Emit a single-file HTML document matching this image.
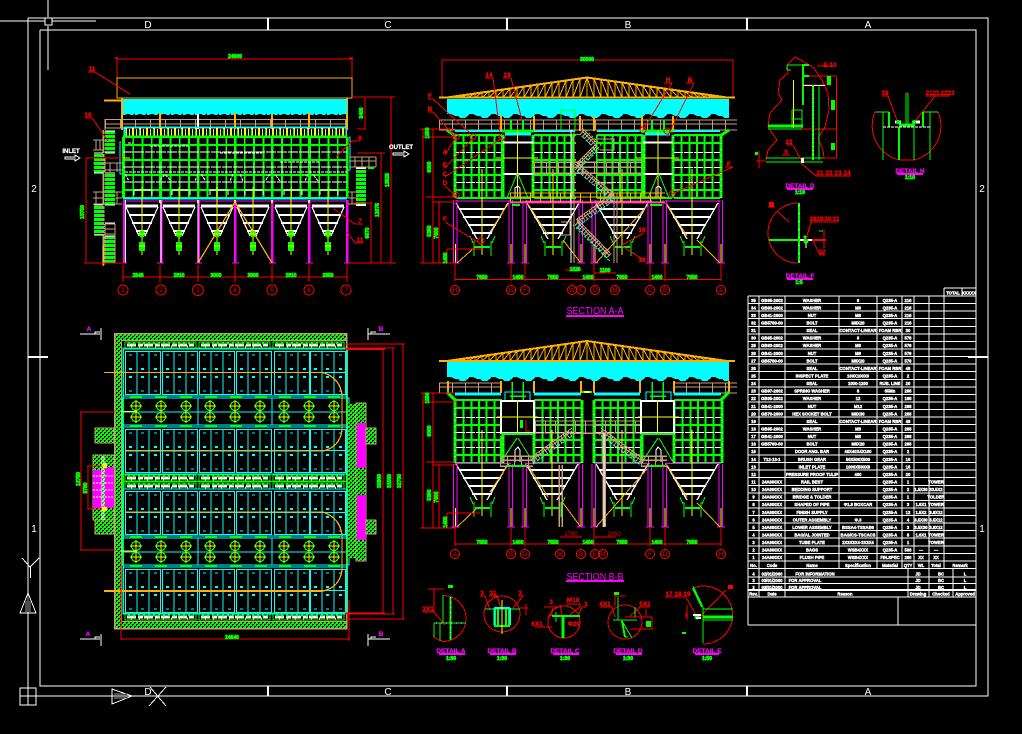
<!DOCTYPE html>
<html><head><meta charset="utf-8"><title>Drawing</title>
<style>
html,body{margin:0;padding:0;background:#000;width:1022px;height:734px;overflow:hidden}
svg{display:block;position:absolute;left:0;top:0}
text{font-family:"Liberation Sans",sans-serif}
.w{fill:#fff;stroke:#fff;stroke-width:.4;font-size:4.2px;font-weight:bold;text-anchor:middle}
.g{fill:#0f0;stroke:#0f0;stroke-width:.7;font-size:5px;font-weight:bold;text-anchor:middle}
.r{fill:#f00;stroke:#f00;stroke-width:.25;font-size:6.5px;font-weight:bold;text-anchor:middle}
.c{fill:#f00;font-size:6px;text-anchor:middle}
.m{fill:#f0f;stroke:#f0f;stroke-width:.2;font-size:6.5px;font-weight:bold;text-anchor:middle}
.t{fill:#fff;font-size:10px;text-anchor:middle}
</style></head><body>
<svg xmlns="http://www.w3.org/2000/svg" width="1022" height="734" viewBox="0 0 1022 734" shape-rendering="crispEdges" fill="none">
<defs>
<pattern id="hat" width="4" height="4" patternUnits="userSpaceOnUse"><rect width="4" height="4" fill="#0f0"/><rect x="0" y="0" width="2" height="1" fill="#000"/><rect x="0" y="1" width="1" height="1" fill="#000"/><rect x="2" y="2" width="2" height="1" fill="#000"/><rect x="2" y="3" width="1" height="1" fill="#000"/></pattern>
<pattern id="sc1" x="123" y="112" width="12" height="4" patternUnits="userSpaceOnUse"><path d="M0 0H12V1L10 3H8L6 2H4L2 3H0Z" fill="#0ff"/></pattern>
<pattern id="sc2" x="447" y="113" width="22" height="6" patternUnits="userSpaceOnUse"><path d="M0 0H22V2L18 5H13L11 3H8L4 1H0Z" fill="#0ff"/></pattern>
<pattern id="sc3" x="447" y="376" width="22" height="6" patternUnits="userSpaceOnUse"><path d="M0 0H22V2L18 5H13L11 3H8L4 1H0Z" fill="#0ff"/></pattern>

<g id="tr">
<path d="M0 -20L140 0M-2 0H148" stroke="#ffb000" stroke-width="2"/>
<path d="M0 0V-20M7 0V-19M14 0V-18M21 0V-17M28 0V-16M35 0V-15M42 0V-14M49 0V-13M56 0V-12M63 0V-11M70 0V-10M77 0V-9M84 0V-8M91 0V-7M98 0V-6M105 0V-5M112 0V-4M119 0V-3M126 0V-2M133 0V-1M0 -20L7 0M7 -19L14 0M14 -18L21 0M21 -17L28 0M28 -16L35 0M35 -15L42 0M42 -14L49 0M49 -13L56 0M56 -12L63 0M63 -11L70 0M70 -10L77 0M77 -9L84 0M84 -8L91 0M91 -7L98 0M98 -6L105 0M105 -5L112 0M112 -4L119 0M119 -3L126 0M126 -2L133 0" stroke="#ffb000"/>
</g>
<g id="truss"><use href="#tr"/><use href="#tr" transform="scale(-1 1)"/></g>

<g id="bay">
<path d="M7.7 0V63M15.4 0V63M23 0V63M30.7 0V63M38.4 0V63M0 0H46M0 8H46M0 25H46M0 40H46M0 55H46M0 63H46" stroke="#0f0" stroke-width="2"/>
<path d="M-1 0V63M47 0V63" stroke="#0f0" stroke-width="3"/>
<path d="M0 17.5H46M0 32.5H46M0 47.5H46" stroke="#fff" stroke-width="1.2" stroke-dasharray="9 1"/>
<path d="M-1 2V63M47 2V63" stroke="#fff" stroke-width="1" stroke-dasharray="1 5"/>
</g>

<g id="hs">
<path d="M-26 0L-5 36M26 0L5 36" stroke="#fff" stroke-width="1.3"/>
<path d="M-23 6H23M-19 14H19M-14 22H14M-10 30H10" stroke="#fff" stroke-width="2"/>
<path d="M0 -34V52" stroke="#ff0"/>
<path d="M-7 44H8" stroke="#0f0" stroke-width="2"/>
<path d="M9 38V53M-8 38V53M-9 40L-12 33M10 40L13 33" stroke="#0f0"/>
</g>

<g id="col">
<path d="M-2 0V63M1.5 0V63" stroke="#f0f"/>
<path d="M0 44V63" stroke="#ff0"/>
<path d="M-4 63H4" stroke="#f0f"/>
</g>

<g id="he">
<path d="M-16 3H16" stroke="#fff" stroke-width="3"/>
<path d="M-16 4L-3 33M16 4L3 33" stroke="#fff" stroke-width="1.2"/>
<path d="M-13 12H13M-10 20H10M-6 28H6" stroke="#fff" stroke-width="1.6"/>
<path d="M0 -16V52" stroke="#ff0"/>
<circle cx="0" cy="31" r="3.5" fill="#0f0"/>
<rect x="-3" y="39" width="6" height="9" fill="#0f0"/>
<path d="M-4 31H4M-3 43H3" stroke="#ff0"/>
</g>

<g id="pb">
<rect x=".5" y=".5" width="35" height="43" stroke="#0ff"/>
<path d="M12 0V43M24 0V43" stroke="#0ff"/>
<path d="M4 4h3M16 4h3M29 4h3M4 40h3M16 40h3M29 40h3" stroke="#0ff"/>
<path d="M4 18h3M16 18h3M29 18h3M4 26h3M16 26h3M29 26h3" stroke="#0ff" stroke-width="2"/>
</g>
<g id="pr">
<rect x="-2" y="-2" width="224" height="47" stroke="#0ff"/>
<use href="#pb" x="0"/><use href="#pb" x="37"/><use href="#pb" x="74"/><use href="#pb" x="111"/><use href="#pb" x="149"/><use href="#pb" x="185"/>
<path d="M0 21.5H221" stroke="#0ff"/>
</g>
<g id="pf">
<circle cx="0" cy="0" r="4.5" stroke="#0f0" stroke-width="1.2"/>
<path d="M-6 0H6M0 -6V6" stroke="#ff0"/>
</g>
<g id="pm">
<rect x="122" y="0" width="227" height="27" stroke="#0ff"/>
<path d="M122 14H349M198 0V27M272 0V27" stroke="#0ff"/>
<path d="M130 -1H142M155 -1H167M180 -1H192M205 -1H217M230 -1H242M255 -1H267M279 -1H291M304 -1H316M328 -1H340M130 28H142M155 28H167M180 28H192M205 28H217M230 28H242M255 28H267M279 28H291M304 28H316M328 28H340" stroke="#0f0" stroke-width="2"/>
<use href="#pf" x="136" y="8"/><use href="#pf" x="161" y="8"/><use href="#pf" x="186" y="8"/><use href="#pf" x="210" y="8"/><use href="#pf" x="235" y="8"/><use href="#pf" x="260" y="8"/><use href="#pf" x="284" y="8"/><use href="#pf" x="309" y="8"/><use href="#pf" x="334" y="8"/>
<use href="#pf" x="136" y="19"/><use href="#pf" x="161" y="19"/><use href="#pf" x="186" y="19"/><use href="#pf" x="210" y="19"/><use href="#pf" x="235" y="19"/><use href="#pf" x="260" y="19"/><use href="#pf" x="284" y="19"/><use href="#pf" x="309" y="19"/><use href="#pf" x="334" y="19"/>
</g>
<g id="ps">
<rect x="0" y="0" width="71" height="6" stroke="#0f0"/>
<path d="M2 3H69" stroke="#fff" stroke-width="2.6" stroke-dasharray="9 2 5 1"/>
<path d="M3 1.5H69" stroke="#0f0" stroke-width="2" stroke-dasharray="2 3"/>
<path d="M6 4.5H69" stroke="#ff0" stroke-width="2" stroke-dasharray="1 7"/>
</g>
<g id="pss"><use href="#ps"/><use href="#ps" x="74"/><use href="#ps" x="148"/></g>
<g id="fa"><path d="M582 132L597 147M597 147L577 167M577 167L613 197M613 197L577 223M577 223L610 257"/></g>
<g id="fb"><path d="M533 460L572 432M601 432L642 462"/></g>
</defs>

<!-- FRAME -->
<g stroke="#fff">
<path d="M28 18H45M52 18H988V696H20M28 18V705M40 30H976V686H40V30"/>
<path d="M0 21H45M52 21H96M48 0V17M48 26V70"/>
<rect x="45" y="18" width="7" height="7"/>
<rect x="20" y="688" width="16" height="17"/><path d="M28 696H36"/>
</g>
<g stroke="#fff" stroke-width="2">
<path d="M268 18V30M507 18V30M747 18V30M268 686V696M507 686V696M747 686V696M28 357H48M968 357H988"/>
</g>
<text class="t" x="148" y="28">D</text><text class="t" x="388" y="28">C</text><text class="t" x="628" y="28">B</text><text class="t" x="868" y="28">A</text>
<text class="t" x="148" y="695">D</text><text class="t" x="388" y="695">C</text><text class="t" x="628" y="695">B</text><text class="t" x="868" y="695">A</text>
<text class="t" x="34" y="192">2</text><text class="t" x="34" y="532">1</text><text class="t" x="982" y="192">2</text><text class="t" x="982" y="532">1</text>
<!-- UCS icons -->
<g stroke="#fff">
<path d="M22 558L30 567L39 558M30.500 567V578"/>
<path d="M20 613H36L28 593Z"/><path d="M28 595V612M26 601V612M30 601V612" stroke="#999"/>
<path d="M112 689V704L132 696Z"/><path d="M114 694H128M114 698H128" stroke="#999"/>
<path d="M149 706L166 687M150 687L166 706"/>
</g>

<!-- FRONT ELEVATION -->
<g>
<path d="M117 59H352M117 57V78M352 57V78M114 58h4M349 58h4" stroke="#f00"/>
<rect x="117" y="78" width="235" height="20" stroke="#ffb000"/>
<path d="M104 100.500H122" stroke="#ffb000" stroke-width="2"/>
<path d="M122 98V130M347 98V130" stroke="#ffb000" stroke-width="2"/>
<rect x="123" y="99" width="224" height="13" fill="#0ff"/>
<rect x="123" y="112" width="224" height="4" fill="url(#sc1)"/>
<!-- rail -->
<path d="M105 119.500H347M105 124H347M105 128H347" stroke="#c8a078" stroke-width="1.300"/>
<path d="M105 124H347" stroke="#c8a078" stroke-width="9" stroke-dasharray="1 14"/>
<path d="M160 112V129M198 114V129M235 112V129M272 114V129M309 112V129" stroke="#ffb000" stroke-width="2"/>
<path d="M198 114V129" stroke="#fff" stroke-width="2"/>
<!-- top teeth -->
<rect x="124" y="127" width="222" height="9" stroke="#0ff" stroke-width="1.500"/>
<path d="M125 132.500H346" stroke="#ff0" stroke-width="7" stroke-dasharray="2 2 1 2"/>
<path d="M125 132.500H346" stroke="#0f0" stroke-width="7" stroke-dasharray="1 13"/>
<path d="M125 128.500H346" stroke="#fff" stroke-dasharray="2 5"/>
<path d="M123 136.500H347" stroke="#0f0" stroke-width="2"/>
<!-- grid -->
<path d="M123 167H347" stroke="#0f0" stroke-width="61" stroke-dasharray="1.800 7.500"/>
<path d="M123 137H347M123 145H347M123 160H347M123 175H347M123 190H347M123 198H347" stroke="#0f0" stroke-width="2"/>
<path d="M123 137V198M160 137V198M198 137V198M235 137V198M272 137V198M309 137V198M347 137V198" stroke="#0f0" stroke-width="2.500"/>
<path d="M123 152H347M123 167H347M123 182H347" stroke="#fff" stroke-dasharray="10 1"/>
<path d="M123 198.500H347" stroke="#0ff" stroke-width="2"/>
<path d="M150 146H190M220 153H262M280 162H320M128 143H133M125 174L129 181M160 180L165 174M170 180L165 174M198 174L195 181M205 180L201 174M233 174L230 181M243 181L240 174M270 174L265 181M280 181L275 174M308 174L305 181M318 181L313 174M125 172H347" stroke="#fff" stroke-dasharray="3 1"/>
<path d="M134 190H152V195M134 190V195M172 190H190V195M172 190V195M210 190H228V195M210 190V195M245 190H263V195M245 190V195M284 190H302V195M284 190V195M320 190H338V195M320 190V195" stroke="#fff"/>
<path d="M142 187V196M179 187V196M217 187V196M253 187V196M291 187V196M328 187V196" stroke="#ff0"/>
<path d="M111 131V132M108 158H130" stroke="#ff0"/>
<!-- cyan side -->
<path d="M121 142H120V174H122M349 137H350V170H347" stroke="#0ff"/>
<!-- hoppers -->
<path d="M123 201H347" stroke="#f0f"/>
<use href="#he" x="142" y="203"/><use href="#he" x="179" y="203"/><use href="#he" x="217" y="203"/><use href="#he" x="253" y="203"/><use href="#he" x="291" y="203"/><use href="#he" x="328" y="203"/>
<path d="M124 200V263M161 200V263M198.500 200V263M235 200V263M272 200V263M309 200V263M347 200V263" stroke="#f0f" stroke-width="2.500"/>
<path d="M125.500 200V263M161 200V263M198 200V263" stroke="#fff"/>
<path d="M120 263H127M157 263H164M195 263H202M232 263H239M269 263H276M306 263H313M344 263H351" stroke="#f0f"/>
<path d="M198 263L235 202L272 263" stroke="#ffb000" stroke-width="1.300"/>
<path d="M160 200V203M198 200V203M235 200V203M272 200V203M309 200V203" stroke="#ff0" stroke-width="2"/>
<!-- left stairs -->
<path d="M103.500 130V265" stroke="#c8a078" stroke-width="2"/>
<path d="M103 245V266" stroke="#ff0"/>
<path d="M93 140H103M93 150H103M93 192H122M93 198H122M93 204H122M93 163H122M93 170H122M105 119V130M105 158V172" stroke="#c8a078"/>
<g stroke="#c8a078"><path d="M96 140V150M100 140V150M110 163V172M117 163V172M96 192V204M113 192V204M117 192V204"/></g>
<rect x="94" y="153" width="9" height="20" fill="#0f0"/><rect x="94" y="205" width="9" height="30" fill="#0f0"/>
<rect x="105" y="131" width="10" height="22" fill="#0f0"/><rect x="105" y="174" width="10" height="31" fill="#0f0"/><rect x="105" y="236" width="10" height="27" fill="#0f0"/>
<path d="M110 130V153M110 173V205M110 223V263M98.500 153V173M98.500 205V235" stroke="#000" stroke-width="12" stroke-dasharray="1 3"/>
<path d="M105 131H115M105 153H115M105 173H115M105 205H115M105 223H115M105 236H115M94 153H103M94 173H103M94 205H103M94 235H103" stroke="#fff"/>
<path d="M105 224H115M105 229H115M105 234H115M115 224V263M105 224V263" stroke="#c8a078"/>
<!-- right stairs -->
<rect x="356" y="169" width="10" height="36" fill="#0f0"/>
<path d="M361 169V205" stroke="#000" stroke-width="10" stroke-dasharray="1 3"/>
<path d="M356 168H366M356 205H366" stroke="#fff" stroke-width="2"/>
<path d="M349 157H376M349 161H376M349 167H376M348 192H358M348 198H358M348 204H358" stroke="#c8a078"/>
<path d="M355 157V167M362 157V167M369 157V167M376 157V167M352 192V204" stroke="#c8a078"/>
<path d="M368 168H374" stroke="#0f0" stroke-width="2"/>
<!-- dims -->
<path d="M86 158V263M86 158H123M84 263H125M352 97H395M391 97V263M357 129H366M365 98V129M357 153H385M381 153V263M354 203H373M371 203V263M350 263H396M123 277H347M123 265V282M160 265V282M198 265V282M235 265V282M272 265V282M309 265V282M347 265V282" stroke="#f00"/>
<path d="M88 72H95L130 94M85 118H92L108 141M360 141H352L336 157M363 224H355L334 209M363 243H355L347 232" stroke="#f00"/>
<text class="r" x="92" y="71">11</text><text class="r" x="88" y="117">10</text><text class="r" x="360" y="140">8</text><text class="r" x="360" y="223">7</text><text class="r" x="360" y="242">11</text>
<text class="g" x="235" y="58">24600</text>
<text class="g" x="138" y="277">2648</text><text class="g" x="179" y="277">2810</text><text class="g" x="216" y="277">3000</text><text class="g" x="253" y="277">3000</text><text class="g" x="291" y="277">2810</text><text class="g" x="328" y="277">2950</text>
<text class="g" transform="rotate(-90 84 212)" x="84" y="212">13750</text>
<text class="g" transform="rotate(-90 363 113)" x="363" y="113">3400</text>
<text class="g" transform="rotate(-90 389 180)" x="389" y="180">13525</text>
<text class="g" transform="rotate(-90 379 210)" x="379" y="210">12075</text>
<text class="g" transform="rotate(-90 369 233)" x="369" y="233">6870</text>
<g stroke="#f00"><circle cx="123" cy="290" r="5"/><circle cx="161" cy="290" r="5"/><circle cx="198" cy="290" r="5.500"/><circle cx="235" cy="290" r="5"/><circle cx="272" cy="290" r="5"/><circle cx="309" cy="290" r="5"/><circle cx="346" cy="290" r="5"/></g>
<text class="c" x="123" y="292">1</text><text class="c" x="161" y="292">2</text><text class="c" x="198" y="292">3</text><text class="c" x="235" y="292">4</text><text class="c" x="272" y="292">5</text><text class="c" x="309" y="292">6</text><text class="c" x="346" y="292">7</text>
<!-- inlet/outlet -->
<text x="71" y="153" fill="#fff" stroke="#fff" stroke-width=".2" font-size="6" font-weight="bold" text-anchor="middle">INLET</text>
<path d="M65 157H75V155L80 158L75 161V159H65Z" stroke="#fff"/>
<text x="401" y="149" fill="#fff" stroke="#fff" stroke-width=".2" font-size="6" font-weight="bold" text-anchor="middle">OUTLET</text>
<path d="M393 153H404V151L409 154L404 157V155H393Z" stroke="#fff"/>
</g>

<!-- SECTION A-A -->
<g>
<path d="M442 60H733M442 60V97M733 60V97" stroke="#f00"/>
<use href="#truss" x="587" y="97.500"/>
<rect x="447" y="99" width="282" height="14" fill="#0ff"/>
<rect x="447" y="113" width="282" height="6" fill="url(#sc2)"/>
<path d="M439 120H737M439 124H737M439 130H737" stroke="#c8a078" stroke-width="1.300"/>
<path d="M439 125H737" stroke="#c8a078" stroke-width="10" stroke-dasharray="1 12"/>
<rect x="561" y="110" width="14" height="21" stroke="#0f0"/>
<path d="M501 116V131M534 116V131M642 116V131M673 116V131M580 116V131M594 116V131" stroke="#ffb000" stroke-width="2"/>
<!-- top band -->
<path d="M455 131H502M534 131H575M597 131H642M673 131H720" stroke="#0ff" stroke-width="2"/>
<path d="M447 130L455 136M729 130L720 136" stroke="#0f0" stroke-width="3"/>
<path d="M502 131H534M642 131H673" stroke="#0f0" stroke-width="3"/>
<path d="M505 134H531M645 134H670" stroke="#0ff" stroke-width="3"/>
<path d="M511 120V132M523 120V132M652 120V132M664 120V132" stroke="#0f0" stroke-width="2"/>
<path d="M455 136H502M534 136H575M597 136H642M673 136H720" stroke="#ff0" stroke-dasharray="1 3"/>
<use href="#bay" x="456" y="135"/><use href="#bay" x="534" y="135"/><use href="#bay" x="597" y="135"/><use href="#bay" x="674" y="135"/>
<rect x="576" y="135" width="20" height="64" fill="#000"/>
<!-- windows -->
<path d="M502 142.500H534M502 174H534M642 142.500H673M642 174H673" stroke="#fff" stroke-width="2"/>
<path d="M517.500 131V198M658 131V198" stroke="#ff0"/>
<path d="M496 158H538M636 158H679" stroke="#ff0"/>
<path d="M517 174L507 198M518 174L528 198M658 174L648 198M659 174L669 198" stroke="#0f0"/>
<path d="M515 198V188L518 186L520 188V198M656 198V188L658 186L661 188V198" stroke="#fff"/>
<path d="M502 198H530M642 198H672M502 135V198M642 135V198" stroke="#0f0" stroke-width="2"/>
<!-- hoppers -->
<path d="M455 201H511M525 201H581M594 201H650M665 201H721" stroke="#f0f"/>
<use href="#hs" x="482" y="203"/><use href="#hs" x="553" y="203"/><use href="#hs" x="622" y="203"/><use href="#hs" x="692" y="203"/>
<use href="#col" x="455.500" y="200"/><use href="#col" x="511" y="200"/><use href="#col" x="525" y="200"/><use href="#col" x="581" y="200"/><use href="#col" x="594" y="200"/><use href="#col" x="650" y="200"/><use href="#col" x="665" y="200"/><use href="#col" x="721" y="200"/>
<path d="M457 263L475 247M490 232L508 204M528 204L548 235M563 240L580 262M596 263L647 206M667 204L687 236M697 240L720 263" stroke="#ffb000"/>
<!-- platforms -->
<path d="M510 193H665M510 197H665M510 202H665" stroke="#ffb000" stroke-width="1.300"/>
<path d="M510 198H665" stroke="#ffb000" stroke-width="10" stroke-dasharray="1 9"/>
<path d="M510 203H665" stroke="#f0f"/>
<path d="M512 205H520M650 205H662" stroke="#0f0" stroke-width="2"/>
<path d="M534 162H642M534 167H642M534 173H642" stroke="#c8a078" stroke-width="1.500"/>
<path d="M534 168H642" stroke="#c8a078" stroke-width="11" stroke-dasharray="1 11"/>
<!-- stairs -->
<g stroke="#c8a078" stroke-width="7" stroke-dasharray="1 2"><use href="#fa"/></g>
<g stroke="#c8a078"><use href="#fa" transform="translate(0 -4)"/><use href="#fa" transform="translate(0 -1)"/></g>
<g stroke="#0ff" stroke-dasharray="3 2"><use href="#fa" transform="translate(0 4)"/></g>
<path d="M586 130L601 145L581 165M573 225L608 260" stroke="#0f0" stroke-dasharray="2 2"/>
<path d="M597 139H614V150H600M600 183H612V193M561 222H570V235H561" stroke="#c8a078"/>
<path d="M571 130V263M574 130V263M614 193V263M617 193V263" stroke="#c8a078"/>
<path d="M571 130V263" stroke="#fff"/>
<path d="M565 270H582" stroke="#f00"/>
<!-- dims -->
<path d="M420 129H455M423 129V263M433 129V263M420 263H455M422 137H456M426 197H455M433 202H455M439 202V263M447 249V263M447 249H482M455 263V281M511 263V281M525 263V281M594 263V281M650 263V281M665 263V281M721 263V281M455 279.500H721M595 273H616" stroke="#f00"/>
<text class="g" transform="rotate(-90 429 133)" x="429" y="133">1550</text>
<text class="g" transform="rotate(-90 431 167)" x="431" y="167">6000</text>
<text class="g" transform="rotate(-90 431 231)" x="431" y="231">5350</text>
<text class="g" transform="rotate(-90 438 233)" x="438" y="233">7000</text>
<text class="g" transform="rotate(-90 447 258)" x="447" y="258">1400</text>
<text class="g" x="482" y="279">7650</text><text class="g" x="518" y="279">1400</text><text class="g" x="553" y="279">7650</text><text class="g" x="588" y="279">1400</text><text class="g" x="622" y="279">7650</text><text class="g" x="657" y="279">1400</text><text class="g" x="692" y="279">7650</text>
<text class="g" x="587" y="61">30000</text>
<text class="g" x="575" y="271">1020</text><text class="g" x="605" y="272">1100</text>
<!-- leaders -->
<path d="M485 78H493L500 133M503 78H511L522 120M664 83H672L643 130M686 83H694L667 137M725 167H733L672 194M428 99H433L470 133M428 112H433L455 137M445 155L456 137M445 168L473 138M445 177L502 138M445 186L456 196M445 222L481 244M644 233L622 245M644 260L622 246" stroke="#f00"/>
<g stroke="#f00"><circle cx="456" cy="137" r="3"/><circle cx="473" cy="137" r="3"/><circle cx="502" cy="137" r="3"/><circle cx="456" cy="195" r="3"/><circle cx="481" cy="241" r="3"/><circle cx="643" cy="130" r="3"/><circle cx="667" cy="131" r="3"/><circle cx="672" cy="194" r="3"/></g>
<text class="r" x="489" y="77">14</text><text class="r" x="507" y="77">19</text><text class="r" x="668" y="82">H</text><text class="r" x="690" y="82">B</text><text class="r" x="729" y="166">F</text>
<text class="r" x="430" y="98">F</text><text class="r" x="430" y="111">B</text><text class="r" x="445" y="154">A</text><text class="r" x="445" y="167">E</text><text class="r" x="445" y="176">C</text><text class="r" x="445" y="185">D</text><text class="r" x="445" y="221">F</text><text class="r" x="642" y="232">16</text><text class="r" x="642" y="262">18</text>
<g stroke="#f00"><circle cx="455" cy="290" r="4.500"/><circle cx="511" cy="290" r="4.500"/><circle cx="525" cy="290" r="4.500"/><circle cx="572" cy="290" r="4.500"/><circle cx="581" cy="290" r="4.500"/><circle cx="595" cy="290" r="4.500"/><circle cx="615" cy="290" r="4.500"/><circle cx="650" cy="290" r="4.500"/><circle cx="665" cy="290" r="4.500"/><circle cx="721" cy="290" r="4.500"/></g>
<text class="c" x="455" y="292">H</text><text class="c" x="511" y="292">G</text><text class="c" x="525" y="292">F</text><text class="c" x="572" y="292">W</text><text class="c" x="581" y="292">E</text><text class="c" x="595" y="292">D</text><text class="c" x="615" y="292">M</text><text class="c" x="650" y="292">C</text><text class="c" x="665" y="292">B</text><text class="c" x="721" y="292">A</text>
<text x="595" y="314" fill="#f0f" font-size="10" text-anchor="middle" textLength="57" lengthAdjust="spacingAndGlyphs">SECTION A-A</text>
<path d="M566 316H624" stroke="#f0f" stroke-width="2"/>
</g>

<!-- PLAN -->
<g>
<rect x="114.500" y="333.500" width="232" height="295" fill="url(#hat)"/>
<rect x="114.500" y="333.500" width="232" height="295" stroke="#c8a078" stroke-width="1.500"/>
<rect x="121.500" y="340.500" width="225" height="281" fill="#000" stroke="#c8a078"/>
<rect x="123" y="348" width="224" height="265" stroke="#0f0" stroke-width="1.500"/>
<rect x="122" y="403" width="2" height="155" fill="#0f0"/>
<use href="#pss" x="125" y="342"/>
<use href="#pss" x="125" y="614"/>
<use href="#pss" x="125" y="475"/>
<use href="#pss" x="125" y="483"/>
<path d="M123 481.500H347" stroke="#0f0"/>
<use href="#pr" x="125" y="351"/>
<use href="#pr" x="125" y="429"/>
<use href="#pr" x="125" y="491"/>
<use href="#pr" x="125" y="569"/>
<use href="#pm" x="0" y="398"/>
<use href="#pm" x="0" y="538"/>
<!-- orange arcs -->
<path d="M104 372.500H323Q340 378 342 395V430Q340 447 323 451M125 451H323" stroke="#ffb000" stroke-width="1.300"/>
<path d="M125 512H323Q340 518 342 535V570Q340 587 323 591" stroke="#ffb000" stroke-width="1.300"/>
<path d="M104 591H323" stroke="#ffb000" stroke-width="2"/>
<path d="M121 411.500H137M121 551H137" stroke="#ff0"/>
<!-- right -->
<rect x="348" y="404" width="8" height="154" fill="url(#hat)"/>
<rect x="356" y="403" width="10" height="158" fill="url(#hat)" stroke="#c8a078"/>
<rect x="357" y="423" width="9" height="45" fill="#f0f"/>
<rect x="357" y="495" width="9" height="45" fill="#f0f"/>
<rect x="366" y="428" width="10" height="16" fill="url(#hat)" stroke="#c8a078"/>
<rect x="366" y="520" width="10" height="14" fill="url(#hat)" stroke="#c8a078"/>
<!-- left -->
<rect x="95" y="428" width="19" height="15" fill="url(#hat)" stroke="#c8a078"/>
<rect x="95" y="520" width="19" height="14" fill="url(#hat)" stroke="#c8a078"/>
<rect x="93" y="455" width="21" height="65" fill="url(#hat)" stroke="#c8a078"/>
<rect x="93" y="470" width="9" height="38" fill="#f0f"/>
<rect x="105" y="467" width="9" height="41" fill="#f0f"/>
<path d="M93 476H102M93 483H102M93 490H102M93 497H102M105 476H114M105 483H114M105 490H114M105 497H114" stroke="#fff" stroke-dasharray="2 1"/>
<path d="M102 456V520M104 456V520" stroke="#fff"/>
<rect x="103" y="463" width="4" height="5" fill="#ff0"/><rect x="102" y="507" width="5" height="4" fill="#ff0"/>
<!-- dims -->
<path d="M345 344H405M348 348H395M345 349.500H385M345 613H385M345 614H395M345 619H405M383 349V613M393 348V614M403 344V619M121 639H350M121 555V640M349 600V641M80 412H115M80 550H115M81 412V550M88 466V509M87 466H102M87 509H102" stroke="#f00"/>
<path d="M345 349H385" stroke="#f00" stroke-width="2"/>
<path d="M121 565V626" stroke="#f00" stroke-dasharray="2 2"/>
<text class="g" x="232" y="639">24640</text>
<text class="g" transform="rotate(-90 381 481)" x="381" y="481">30900</text>
<text class="g" transform="rotate(-90 391 481)" x="391" y="481">31500</text>
<text class="g" transform="rotate(-90 401 481)" x="401" y="481">32700</text>
<text class="g" transform="rotate(-90 80 479)" x="80" y="479">12750</text>
<text class="g" transform="rotate(-90 87 488)" x="87" y="488">3780</text>
<!-- section marks -->
<path d="M80 334H100M101 328V340M368 334H390M368 328V340M80 639H100M101 634V646M368 639H390M368 634V646" stroke="#fff"/>
<path d="M95 334V332H100M371 334V332H376M95 639V637H100M371 639V637H376" stroke="#fff"/>
<text class="m" x="89" y="331">A</text><text class="m" x="381" y="331">B</text><text class="m" x="88" y="636">A</text><text class="m" x="381" y="636">B</text>
</g>

<!-- SECTION B-B -->
<g>
<use href="#truss" x="587" y="361"/>
<path d="M443 361H447M729 361H733" stroke="#ffb000" stroke-width="2"/>
<rect x="447" y="362" width="282" height="14" fill="#0ff"/>
<rect x="447" y="376" width="282" height="6" fill="url(#sc3)"/>
<path d="M439 383H500M439 387H500M439 393H500M673 383H737M673 387H737M673 393H737" stroke="#c8a078" stroke-width="1.300"/>
<path d="M439 388H500M673 388H737" stroke="#c8a078" stroke-width="10" stroke-dasharray="1 12"/>
<path d="M448 381V393M501 381V393M534 381V393M581 381V393M594 381V393M640 381V393M674 381V393M729 381V393" stroke="#ffb000" stroke-width="2"/>
<path d="M455 394H501M534 394H581M594 394H640M674 394H721" stroke="#0ff" stroke-width="3"/>
<path d="M447 392L455 400M729 392L721 400" stroke="#0f0" stroke-width="3"/>
<path d="M455 400H501M534 400H581M594 400H640M674 400H721" stroke="#ff0" stroke-dasharray="1 3"/>
<rect x="505" y="392" width="25" height="9" stroke="#0ff"/><rect x="646" y="392" width="25" height="9" stroke="#0ff"/>
<path d="M512 382V400M523 382V400M652 382V400M663 382V400M510 396H526M650 396H666" stroke="#0f0" stroke-width="1.500"/>
<path d="M582 392H592" stroke="#0f0" stroke-width="2"/><path d="M584 392H590" stroke="#ff0" stroke-width="2"/>
<use href="#bay" x="456" y="400"/><use href="#bay" x="535" y="400"/><use href="#bay" x="595" y="400"/><use href="#bay" x="675" y="400"/>
<!-- windows -->
<rect x="501" y="401" width="33" height="32" fill="#000" stroke="#fff" stroke-width="2"/>
<rect x="641" y="401" width="33" height="32" fill="#000" stroke="#fff" stroke-width="2"/>
<path d="M517.500 400V434M657.500 400V434M497 417H538M638 417H679" stroke="#ff0"/>
<rect x="520" y="420" width="3" height="8" fill="#0f0"/>
<path d="M526 420V431H530" stroke="#f00"/>
<path d="M501 434H534M641 434H674M501 436V462M641 436V462" stroke="#0f0" stroke-width="2"/>
<path d="M517 438L501 462M518 438L533 462M658 438L642 462M659 438L673 462" stroke="#0f0"/>
<path d="M515 462V450L518 447L520 450V462M656 462V450L658 447L661 450V462" stroke="#fff"/>
<rect x="502" y="463" width="30" height="4" fill="#000"/>
<!-- hoppers -->
<path d="M455 463.500H511M525 463.500H581M594 463.500H650M665 463.500H721" stroke="#f0f"/>
<use href="#hs" x="482" y="464"/><use href="#hs" x="552" y="464"/><use href="#hs" x="622" y="464"/><use href="#hs" x="692" y="464"/>
<use href="#col" x="455.500" y="464"/><use href="#col" x="511" y="464"/><use href="#col" x="525" y="464"/><use href="#col" x="581" y="464"/><use href="#col" x="594" y="464"/><use href="#col" x="650" y="464"/><use href="#col" x="665" y="464"/><use href="#col" x="721" y="464"/>
<path d="M457 527L476 509M490 492L508 465M528 465L548 497M563 503L580 526M596 527L647 469M667 465L687 497M697 503L720 527" stroke="#ffb000"/>
<!-- rail, stairs -->
<path d="M535 421H640M535 425H640M535 433H640" stroke="#c8a078" stroke-width="1.300"/>
<path d="M535 427H640" stroke="#c8a078" stroke-width="12" stroke-dasharray="1 9"/>
<path d="M500 456H533M500 460H533M500 466H533M641 456H667M641 460H667M641 466H667M570 433H605" stroke="#c8a078" stroke-width="1.500"/>
<path d="M500 461H533M641 461H667" stroke="#c8a078" stroke-width="10" stroke-dasharray="1 6"/>
<path d="M506 466H526M648 466H665" stroke="#0f0" stroke-width="2"/>
<g stroke="#c8a078" stroke-width="7" stroke-dasharray="1 2"><use href="#fb"/></g>
<g stroke="#c8a078"><use href="#fb" transform="translate(0 -4)"/><use href="#fb" transform="translate(0 -1)"/></g>
<g stroke="#0ff" stroke-dasharray="3 2"><use href="#fb" transform="translate(0 4)"/></g>
<path d="M562 465V527M559 465V527M603 433V527M605 433V527" stroke="#c8a078" stroke-width="1.500"/>
<path d="M604 433V527" stroke="#fff"/>
<!-- dims -->
<path d="M421 393H455M423 393V528M433 393V528M420 528H455M422 402H456M426 462H455M433 465H455M439 465V528M447 513V528M447 513H480M455 528V546M511 528V546M525 528V546M594 528V546M650 528V546M665 528V546M721 528V546M455 544H721M560 537H582M595 537H616" stroke="#f00"/>
<text class="g" transform="rotate(-90 429 398)" x="429" y="398">1550</text>
<text class="g" transform="rotate(-90 431 431)" x="431" y="431">6000</text>
<text class="g" transform="rotate(-90 431 495)" x="431" y="495">5350</text>
<text class="g" transform="rotate(-90 438 497)" x="438" y="497">7000</text>
<text class="g" transform="rotate(-90 447 522)" x="447" y="522">1400</text>
<text class="g" x="482" y="544">7650</text><text class="g" x="518" y="544">1400</text><text class="g" x="553" y="544">7650</text><text class="g" x="588" y="544">1400</text><text class="g" x="622" y="544">7650</text><text class="g" x="657" y="544">1400</text><text class="g" x="692" y="544">7650</text>
<text class="c" x="571" y="536" font-size="5">1750</text><text class="c" x="614" y="536" font-size="5">1050</text>
<g stroke="#f00"><circle cx="455" cy="554" r="4.500"/><circle cx="511" cy="554" r="4.500"/><circle cx="525" cy="554" r="4.500"/><circle cx="560" cy="554" r="4.500"/><circle cx="581" cy="554" r="4.500"/><circle cx="595" cy="554" r="4.500"/><circle cx="603" cy="554" r="4.500"/><circle cx="650" cy="554" r="4.500"/><circle cx="665" cy="554" r="4.500"/><circle cx="721" cy="554" r="4.500"/></g>
<text class="c" x="455" y="556">A</text><text class="c" x="511" y="556">B</text><text class="c" x="525" y="556">D</text><text class="c" x="560" y="556">W</text><text class="c" x="581" y="556">B</text><text class="c" x="595" y="556">E</text><text class="c" x="603" y="556">M</text><text class="c" x="650" y="556">F</text><text class="c" x="665" y="556">D</text><text class="c" x="721" y="556">H</text>
<text x="595" y="580" fill="#f0f" font-size="10" text-anchor="middle" textLength="57" lengthAdjust="spacingAndGlyphs">SECTION B-B</text>
<path d="M566 581H624" stroke="#f0f" stroke-width="2"/>
</g>

<!-- BOTTOM DETAILS -->
<g>
<!-- A -->
<path d="M443 595.500A23 23 0 0 1 443 641.500A23 23 0 0 1 433 636" stroke="#f00"/>
<path d="M428 589H444M422 612H434L445 625M434 589V612" stroke="#f00"/>
<path d="M443 595V623M434 623H466M434 623V637M440 623V641" stroke="#0f0"/>
<path d="M450.500 597V640" stroke="#0f0" stroke-width="2"/>
<path d="M450.500 597V640M436 623H466" stroke="#fff" stroke-dasharray="1 4"/>
<rect x="448" y="585" width="5" height="3" fill="#0f0"/>
<text class="r" x="428" y="611" font-size="5">3X1</text>
<!-- B -->
<circle cx="502" cy="614" r="18" stroke="#f00"/>
<path d="M480 596H485L490 610M489 596H497L501 608M518 596H523L513 608" stroke="#f00"/>
<path d="M485 609H520" stroke="#0f0"/><rect x="495" y="608" width="14" height="18" stroke="#0f0" stroke-width="2"/><path d="M498 608V626M506 608V626" stroke="#0f0" stroke-width="2"/>
<path d="M494 608V625M510 608V625" stroke="#0ff" stroke-width="1.500"/><path d="M495 608H510" stroke="#0ff" stroke-width="2"/>
<path d="M502 600V634" stroke="#ff0"/>
<path d="M526 604V615M520 608H528" stroke="#f00"/>
<text class="r" x="482" y="595" font-size="5">3</text><text class="r" x="493" y="595" font-size="5">31</text><text class="r" x="520" y="595" font-size="5">3</text>
<!-- C -->
<circle cx="564" cy="622" r="16" stroke="#f00"/>
<path d="M553 608L550 616L553 614M544 607H560M566 604H580V607M560 604L562 616M580 607L568 616M586 607H582L578 616M552 627H535" stroke="#f00"/>
<path d="M552 616H580" stroke="#0f0" stroke-width="2"/><path d="M563 617V638" stroke="#0f0" stroke-width="3"/>
<path d="M556 612V622" stroke="#0f0"/>
<text class="r" x="551" y="604" font-size="5">3</text><text class="r" x="573" y="602" font-size="5">M10</text><text class="r" x="586" y="606" font-size="5">1</text><text class="r" x="537" y="626" font-size="5">6X1</text>
<text class="r" x="574" y="626" font-size="5">Φ20</text>
<!-- D -->
<circle cx="625" cy="622" r="17" stroke="#f00"/>
<path d="M615 595V606M615 596H625M600 607H612L615 617M650 607H640L630 616M646 609V616M625 617H652M652 617V629M630 629H652" stroke="#f00"/>
<path d="M618 597V620M635 607V617M618 620H637M613 620H622L625 637L628 637M622 621L632 638" stroke="#0f0"/>
<path d="M622 621L625 637" stroke="#0f0" stroke-width="2"/>
<rect x="646" y="621" width="5" height="6" fill="#0f0"/>
<text class="r" x="605" y="606" font-size="5">4X1</text><text class="r" x="645" y="606" font-size="5">5X1</text><rect x="614" y="592" width="5" height="3" fill="#0f0"/>
<!-- E -->
<path d="M693 588A29 29 0 1 1 703 644" stroke="#f00"/>
<path d="M665 597H686L697 617M726 590L700 617M687 605V620M686 613V617" stroke="#f00"/>
<path d="M693 586L703 607V643M703 609H733M703 620H733" stroke="#0f0"/>
<path d="M693 588L702 607" stroke="#0f0" stroke-width="2"/><path d="M703 617H733" stroke="#0f0" stroke-width="3"/>
<circle cx="697" cy="617" r="2.500" fill="#0f0"/><path d="M693 615H701M696 618H701" stroke="#fff" stroke-width="2"/>
<path d="M682 633H686" stroke="#0f0" stroke-width="2"/>
<text class="r" x="678" y="596" font-size="5">17 18 19</text><rect x="728" y="585" width="5" height="4" fill="#f00"/>
<!-- labels -->
<text class="m" x="451" y="653" font-size="6">DETAIL A</text><path d="M439 654H465" stroke="#f0f" stroke-width="2"/>
<text class="m" x="502" y="653" font-size="6">DETAIL B</text><path d="M490 654H516" stroke="#f0f" stroke-width="2"/>
<text class="m" x="565" y="653" font-size="6">DETAIL C</text><path d="M553 654H579" stroke="#f0f" stroke-width="2"/>
<text class="m" x="628" y="653" font-size="6">DETAIL D</text><path d="M616 654H642" stroke="#f0f" stroke-width="2"/>
<text class="m" x="707" y="653" font-size="6">DETAIL E</text><path d="M695 654H719" stroke="#f0f" stroke-width="2"/>
<text class="g" x="451" y="660" font-size="4">1:30</text><text class="g" x="502" y="660" font-size="4">1:30</text><text class="g" x="565" y="660" font-size="4">1:30</text><text class="g" x="628" y="660" font-size="4">1:30</text><text class="g" x="707" y="660" font-size="4">1:50</text>
</g>

<!-- TOP RIGHT DETAILS -->
<g>
<path d="M795 57L787 65L788 73L780 80L778 93L782 100L770 113L768 127L777 140L768 150L766 160M795 57L813 67L822 80L828 93L829 110L825 127L818 138L823 150L824 158" stroke="#f00"/>
<path d="M766 158H837M836.500 77V158M768 129H837M803 76H837M827 75V85M804 85H826M817 66H833" stroke="#f00"/>
<path d="M787 65H808M787 65V70M787 70H791" stroke="#0f0"/>
<path d="M803 65V105" stroke="#0f0" stroke-width="2"/>
<path d="M802 65H809M802 76H809" stroke="#0f0" stroke-width="2"/>
<path d="M768 126H803" stroke="#0f0" stroke-width="3"/>
<path d="M768 129H802" stroke="#0f0"/>
<path d="M793.500 80V128" stroke="#ff0"/>
<path d="M792 110H802V128M792 119H802M792 110V128" stroke="#0f0"/>
<path d="M803 85.500H825" stroke="#fff"/>
<path d="M813 85V160" stroke="#0f0" stroke-width="2"/>
<path d="M813 86V160" stroke="#fff" stroke-dasharray="1 3"/>
<path d="M819 85V160" stroke="#0f0"/>
<path d="M766 158H823M766 162H823" stroke="#0f0"/>
<rect x="801" y="158" width="3" height="5" fill="#fff"/>
<rect x="827" y="76" width="4" height="9" fill="#0f0"/><rect x="831" y="100" width="4" height="10" fill="#0f0"/><rect x="831" y="143" width="4" height="7" fill="#0f0"/>
<path d="M787 145H793L801 160M782 155H790M801 163L816 176H851" stroke="#f00"/>
<path d="M759 151V168M756 161H766" stroke="#f00"/><rect x="755" y="152" width="3" height="3" fill="#0f0"/>
<text class="r" x="789" y="144" font-size="5">22</text><text class="r" x="786" y="154" font-size="5">0</text>
<text class="r" x="830" y="67" font-size="5">E 10</text>
<text class="r" x="820" y="175" font-size="5">21</text><text class="r" x="829" y="175" font-size="5">22</text><text class="r" x="838" y="175" font-size="5">23</text><text class="r" x="847" y="175" font-size="5">24</text>
<text class="m" x="800" y="188" font-size="6">DETAIL D</text><path d="M787 189H813" stroke="#f0f" stroke-width="2"/>
<text class="g" x="800" y="194" font-size="4">1:10</text>
<!-- H -->
<path d="M875 112A35 35 0 0 0 900 160H914A35 35 0 0 0 938 112M899.500 160H914" stroke="#f00"/>
<path d="M882 96H888L897 120M926 96H935L916 120" stroke="#f00"/><path d="M926 96H950" stroke="#f00"/>
<path d="M875 112H889M923 112H938M883 127V160M914 127V160M930 127V160M883 112V127M930 112V127M906 93V125M908 93V125" stroke="#0f0"/>
<path d="M899 127V160M889 112V127M923 112V127" stroke="#0f0" stroke-width="2"/>
<path d="M899 125H915" stroke="#0f0" stroke-width="3"/>
<path d="M883 127H930" stroke="#fff" stroke-dasharray="3 1"/>
<path d="M895 122H901M914 122H920" stroke="#fff" stroke-width="3"/><circle cx="898" cy="122" r="2" fill="#0f0"/><circle cx="914" cy="122" r="2" fill="#0f0"/>
<path d="M906 93H908" stroke="#f00"/>
<text class="r" x="885" y="95" font-size="5">39</text><text class="r" x="929" y="95" font-size="5">21</text><text class="r" x="936" y="95" font-size="5">21</text><text class="r" x="944" y="95" font-size="5">22</text><text class="r" x="951" y="95" font-size="5">23</text>
<text class="m" x="910" y="173" font-size="6">DETAIL H</text><path d="M897 174H923" stroke="#f0f" stroke-width="2"/>
<text class="g" x="910" y="179" font-size="4">1:10</text>
<!-- F -->
<path d="M798 203A30 30 0 0 0 798 263" stroke="#f00"/>
<path d="M799 203V263" stroke="#0f0" stroke-width="2"/><path d="M799 205V262" stroke="#fff" stroke-dasharray="1 7"/>
<path d="M769 240H800" stroke="#0f0" stroke-width="2"/>
<path d="M812 240H826" stroke="#f00" stroke-width="2"/>
<path d="M800 240H812" stroke="#fff" stroke-width="2"/><circle cx="806" cy="241" r="2.500" fill="#0f0"/><circle cx="805" cy="237" r="1.500" fill="#0f0"/>
<path d="M806 243V248" stroke="#fff"/>
<path d="M824 229V248M819 231H823M820 255H825M820 255L813 241M811 222H838M811 222L806 240M778 212L789 222" stroke="#f00"/>
<path d="M819 231H823" stroke="#0f0"/>
<rect x="769" y="202" width="5" height="5" fill="#f00"/><path d="M768 207H775" stroke="#f00"/>
<text class="r" x="813" y="221" font-size="5">28</text><text class="r" x="820" y="221" font-size="5">29</text><text class="r" x="828" y="221" font-size="5">30</text><text class="r" x="836" y="221" font-size="5">31</text><text class="r" x="822" y="254" font-size="5">32</text>
<text class="m" x="800" y="278" font-size="6">DETAIL F</text><path d="M787 279H813" stroke="#f0f" stroke-width="2"/>
<text class="g" x="799" y="284" font-size="4">1:5</text>
</g>

<!-- TABLE -->
<g stroke="#fff">
<path d="M748 296H976M748 303.600H976M748 311.100H976M748 318.700H976M748 326.300H976M748 333.900H976M748 341.400H976M748 349H976M748 356.600H976M748 364.100H976M748 371.700H976M748 379.300H976M748 386.800H976M748 394.400H976M748 402H976M748 409.600H976M748 417.100H976M748 424.700H976M748 432.300H976M748 439.800H976M748 447.400H976M748 455H976M748 462.500H976M748 470.100H976M748 477.700H976M748 485.300H976M748 492.800H976M748 500.400H976M748 508H976M748 515.500H976M748 523.100H976M748 530.700H976M748 538.200H976M748 545.800H976M748 553.400H976M748 561H976M748 568.500H976"/>
<path d="M748 296V625M759 296V597M785 296V597M839 296V569M877 296V569M902 296V569M914 296V569M929 296V597M944 288V569M953 569V597M976 288V625M908 569V597"/>
<path d="M748 577H976M748 583.500H976M748 590H976" />
<path d="M748 597H976M748 625H976M898 597V625M944 288H976M962 288V296" stroke-width="1"/>
<path d="M748 590H976" stroke-width="2"/>
</g>
<g>
<text class="w" y="301.800"><tspan x="753.500">35</tspan><tspan x="772">GB95-2002</tspan><tspan x="812">WASHER</tspan><tspan x="858">8</tspan><tspan x="890">Q235-A</tspan><tspan x="908">216</tspan></text>
<text class="w" y="309.400"><tspan x="753.500">34</tspan><tspan x="772">GB93-2002</tspan><tspan x="812">WASHER</tspan><tspan x="858">M8</tspan><tspan x="890">Q235-A</tspan><tspan x="908">216</tspan></text>
<text class="w" y="316.900"><tspan x="753.500">33</tspan><tspan x="772">GB41-2000</tspan><tspan x="812">NUT</tspan><tspan x="858">M8</tspan><tspan x="890">Q235-A</tspan><tspan x="908">216</tspan></text>
<text class="w" y="324.500"><tspan x="753.500">32</tspan><tspan x="772">GB5780-00</tspan><tspan x="812">BOLT</tspan><tspan x="858">M8X20</tspan><tspan x="890">Q235-A</tspan><tspan x="908">216</tspan></text>
<text class="w" y="332.100"><tspan x="753.500">31</tspan><tspan x="812">SEAL</tspan><tspan x="858">CONTACT-LINEAR</tspan><tspan x="890">FOAM RBR</tspan><tspan x="908">30</tspan></text>
<text class="w" y="339.600"><tspan x="753.500">30</tspan><tspan x="772">GB95-2002</tspan><tspan x="812">WASHER</tspan><tspan x="858">8</tspan><tspan x="890">Q235-A</tspan><tspan x="908">576</tspan></text>
<text class="w" y="347.200"><tspan x="753.500">29</tspan><tspan x="772">GB93-2002</tspan><tspan x="812">WASHER</tspan><tspan x="858">M8</tspan><tspan x="890">Q235-A</tspan><tspan x="908">576</tspan></text>
<text class="w" y="354.800"><tspan x="753.500">28</tspan><tspan x="772">GB41-2000</tspan><tspan x="812">NUT</tspan><tspan x="858">M8</tspan><tspan x="890">Q235-A</tspan><tspan x="908">576</tspan></text>
<text class="w" y="362.400"><tspan x="753.500">27</tspan><tspan x="772">GB5780-00</tspan><tspan x="812">BOLT</tspan><tspan x="858">M8X20</tspan><tspan x="890">Q235-A</tspan><tspan x="908">576</tspan></text>
<text class="w" y="369.900"><tspan x="753.500">26</tspan><tspan x="812">SEAL</tspan><tspan x="858">CONTACT-LINEAR</tspan><tspan x="890">FOAM RBR</tspan><tspan x="908">48</tspan></text>
<text class="w" y="377.500"><tspan x="753.500">25</tspan><tspan x="812">INSPECT PLATE</tspan><tspan x="858">100X100X6</tspan><tspan x="890">Q235-A</tspan><tspan x="908">2</tspan></text>
<text class="w" y="385.100"><tspan x="753.500">24</tspan><tspan x="812">SEAL</tspan><tspan x="858">1000-1200</tspan><tspan x="890">RUB. LINE</tspan><tspan x="908">20</tspan></text>
<text class="w" y="392.600"><tspan x="753.500">23</tspan><tspan x="772">GB97-2002</tspan><tspan x="812">SPRING WASHER</tspan><tspan x="858">8</tspan><tspan x="890">65Mn</tspan><tspan x="908">288</tspan></text>
<text class="w" y="400.200"><tspan x="753.500">22</tspan><tspan x="772">GB95-2002</tspan><tspan x="812">WASHER</tspan><tspan x="858">12</tspan><tspan x="890">Q235-A</tspan><tspan x="908">168</tspan></text>
<text class="w" y="407.800"><tspan x="753.500">21</tspan><tspan x="772">GB41-2000</tspan><tspan x="812">NUT</tspan><tspan x="858">M12</tspan><tspan x="890">Q235-A</tspan><tspan x="908">288</tspan></text>
<text class="w" y="415.400"><tspan x="753.500">20</tspan><tspan x="772">GB70-2000</tspan><tspan x="812">HEX SOCKET BOLT</tspan><tspan x="858">M8X30</tspan><tspan x="890">Q235-A</tspan><tspan x="908">288</tspan></text>
<text class="w" y="422.900"><tspan x="753.500">19</tspan><tspan x="812">SEAL</tspan><tspan x="858">CONTACT-LINEAR</tspan><tspan x="890">FOAM RBR</tspan><tspan x="908">48</tspan></text>
<text class="w" y="430.500"><tspan x="753.500">18</tspan><tspan x="772">GB95-2002</tspan><tspan x="812">WASHER</tspan><tspan x="858">M8</tspan><tspan x="890">Q235-A</tspan><tspan x="908">288</tspan></text>
<text class="w" y="438.100"><tspan x="753.500">17</tspan><tspan x="772">GB41-2000</tspan><tspan x="812">NUT</tspan><tspan x="858">M8</tspan><tspan x="890">Q235-A</tspan><tspan x="908">288</tspan></text>
<text class="w" y="445.600"><tspan x="753.500">16</tspan><tspan x="772">GB5780-00</tspan><tspan x="812">BOLT</tspan><tspan x="858">M8X20</tspan><tspan x="890">Q235-A</tspan><tspan x="908">288</tspan></text>
<text class="w" y="453.200"><tspan x="753.500">15</tspan><tspan x="812">DOOR ANG. BAR</tspan><tspan x="858">40X40X4X100</tspan><tspan x="890">Q235-A</tspan><tspan x="908">2</tspan></text>
<text class="w" y="460.800"><tspan x="753.500">14</tspan><tspan x="772">T12-13-1</tspan><tspan x="812">BRUSH GEAR</tspan><tspan x="858">50X500X500</tspan><tspan x="890">Q235-A</tspan><tspan x="908">16</tspan></text>
<text class="w" y="468.300"><tspan x="753.500">13</tspan><tspan x="812">INLET PLATE</tspan><tspan x="858">1000X500X6</tspan><tspan x="890">Q235-A</tspan><tspan x="908">16</tspan></text>
<text class="w" y="475.900"><tspan x="753.500">12</tspan><tspan x="812">PRESSURE PROOF TULIP</tspan><tspan x="858">400</tspan><tspan x="890">Q235-A</tspan><tspan x="908">20</tspan></text>
<text class="w" y="483.500"><tspan x="753.500">11</tspan><tspan x="772">24A800XX</tspan><tspan x="812">RAIL BEST</tspan><tspan x="890">Q235-A</tspan><tspan x="908">1</tspan><tspan x="936">TOWER</tspan></text>
<text class="w" y="491.100"><tspan x="753.500">10</tspan><tspan x="772">24A800XX</tspan><tspan x="812">BEDDING SUPPORT</tspan><tspan x="890">Q235-A</tspan><tspan x="908">2</tspan><tspan x="921">1.5X30</tspan><tspan x="936">33.5X2</tspan></text>
<text class="w" y="498.600"><tspan x="753.500">9</tspan><tspan x="772">24A800XX</tspan><tspan x="812">BRIDGE &amp; TOLDER</tspan><tspan x="890">Q235-A</tspan><tspan x="908">1</tspan><tspan x="936">TOLDER</tspan></text>
<text class="w" y="506.200"><tspan x="753.500">8</tspan><tspan x="772">24A800XX</tspan><tspan x="812">SHAPED OF PIPE</tspan><tspan x="858">Φ1.8 BOXCAR</tspan><tspan x="890">Q235-A</tspan><tspan x="908">3</tspan><tspan x="921">1.8X1</tspan><tspan x="936">TOWER</tspan></text>
<text class="w" y="513.800"><tspan x="753.500">7</tspan><tspan x="772">24A800XX</tspan><tspan x="812">FINISH SUPPLY</tspan><tspan x="890">Q235-A</tspan><tspan x="908">12</tspan><tspan x="921">1.5X2</tspan><tspan x="936">3.8X12</tspan></text>
<text class="w" y="521.300"><tspan x="753.500">6</tspan><tspan x="772">24A800XX</tspan><tspan x="812">OUTER ASSEMBLY</tspan><tspan x="858">Φ.3</tspan><tspan x="890">Q235-A</tspan><tspan x="908">4</tspan><tspan x="921">3.5X30</tspan><tspan x="936">3.5X12</tspan></text>
<text class="w" y="528.900"><tspan x="753.500">5</tspan><tspan x="772">24A800XX</tspan><tspan x="812">LOWER ASSEMBLY</tspan><tspan x="858">BSSA4-TSSAB6</tspan><tspan x="890">Q235-A</tspan><tspan x="908">3</tspan><tspan x="921">3.5X30</tspan><tspan x="936">3.8X12</tspan></text>
<text class="w" y="536.500"><tspan x="753.500">4</tspan><tspan x="772">24A800XX</tspan><tspan x="812">BAG/AL JOINTED</tspan><tspan x="858">BAG/CS-TSCACS</tspan><tspan x="890">Q235-A</tspan><tspan x="908">8</tspan><tspan x="921">1.6X1</tspan><tspan x="936">TOWER</tspan></text>
<text class="w" y="544.000"><tspan x="753.500">3</tspan><tspan x="772">24A800XX</tspan><tspan x="812">TUBE PLATE</tspan><tspan x="858">2X3X3X4-3X3X4</tspan><tspan x="890">Q235-A</tspan><tspan x="908">1</tspan><tspan x="936">TOWER</tspan></text>
<text class="w" y="551.600"><tspan x="753.500">2</tspan><tspan x="772">24A800XX</tspan><tspan x="812">BAGS</tspan><tspan x="858">WSB4XXX</tspan><tspan x="890">Q235-A</tspan><tspan x="908">588</tspan><tspan x="921">---</tspan><tspan x="936">---</tspan></text>
<text class="w" y="559.200"><tspan x="753.500">1</tspan><tspan x="772">24A800XX</tspan><tspan x="812">FLUSH PIPE</tspan><tspan x="858">WSB4XXX</tspan><tspan x="890">FIN.SPEC</tspan><tspan x="908">260</tspan><tspan x="921">XX</tspan><tspan x="936">XX</tspan></text>
<text class="w" y="566.800"><tspan x="753.500">No.</tspan><tspan x="772">Code</tspan><tspan x="812">Name</tspan><tspan x="858">Specification</tspan><tspan x="890">Material</tspan><tspan x="908">QTY</tspan><tspan x="921">Wt.</tspan><tspan x="936">Total</tspan><tspan x="960">Remark</tspan></text>
<text class="w" y="575.500"><tspan x="753.500">4</tspan><tspan x="772">02/01/2000</tspan><tspan x="815">FOR INFORMATION</tspan><tspan x="918">JD</tspan><tspan x="941">BC</tspan><tspan x="965">L</tspan></text>
<text class="w" y="582"><tspan x="753.500">3</tspan><tspan x="772">03/01/2000</tspan><tspan x="805">FOR APPROVAL</tspan><tspan x="918">JD</tspan><tspan x="941">BC</tspan><tspan x="965">L</tspan></text>
<text class="w" y="589"><tspan x="753.500">2</tspan><tspan x="772">03/01/2000</tspan><tspan x="805">FOR APPROVAL</tspan><tspan x="918">JD</tspan><tspan x="941">BC</tspan><tspan x="965">L</tspan></text>
<text class="w" y="595.500"><tspan x="753.500">Rev.</tspan><tspan x="772">Date</tspan><tspan x="845">Reason</tspan><tspan x="918">Drawing</tspan><tspan x="941">Checked</tspan><tspan x="965">Approved</tspan></text>
<text class="w" y="294.500"><tspan x="953">TOTAL</tspan><tspan x="969">XXXXX</tspan></text>
</g>
</svg>
</body></html>
